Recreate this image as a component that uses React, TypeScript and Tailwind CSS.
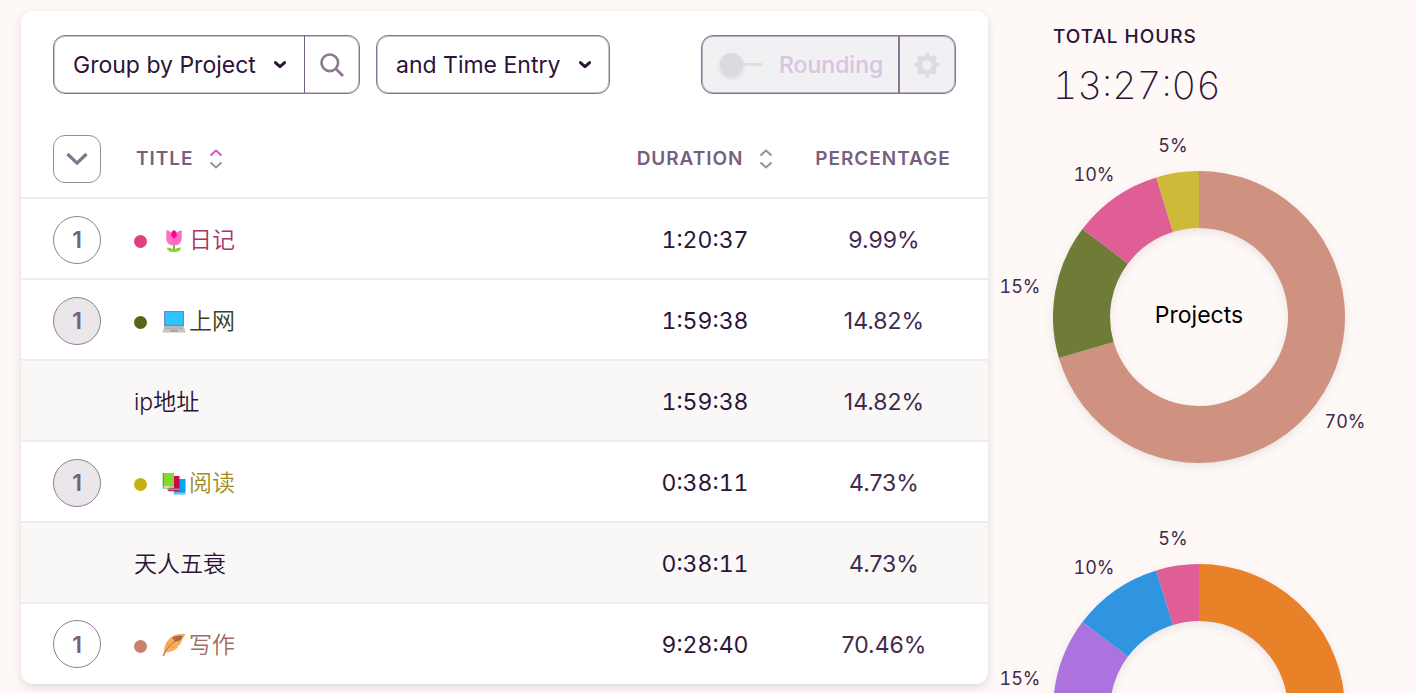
import type { ReactNode } from 'react'

type Slice = { share: number; color: string; label: string; x: number; y: number }

const PROJECTS: Slice[] = [
  { share: 70.46, color: '#cf9280', label: '70%', x: 345, y: 301 },
  { share: 14.82, color: '#6f7c38', label: '15%', x: 20, y: 166 },
  { share: 9.99, color: '#df5e96', label: '10%', x: 94, y: 54 },
  { share: 4.73, color: '#cdba38', label: '5%', x: 173, y: 25 },
]

const ENTRIES: Slice[] = [
  { share: 70.46, color: '#e88127', label: '70%', x: 345, y: 301 },
  { share: 14.82, color: '#ac73de', label: '15%', x: 20, y: 165 },
  { share: 9.99, color: '#2f95e0', label: '10%', x: 94, y: 54 },
  { share: 4.73, color: '#df5e96', label: '5%', x: 173, y: 25 },
]

const CX = 199
const CY = 197
const OUTER = 146
const INNER = 89

function point(radius: number, share: number) {
  const a = (share / 100) * Math.PI * 2
  return `${(CX + radius * Math.sin(a)).toFixed(2)} ${(CY - radius * Math.cos(a)).toFixed(2)}`
}

function slicePath(from: number, to: number) {
  const large = to - from > 50 ? 1 : 0
  return `M${point(OUTER, from)}A${OUTER} ${OUTER} 0 ${large} 1 ${point(OUTER, to)}L${point(INNER, to)}A${INNER} ${INNER} 0 ${large} 0 ${point(INNER, from)}Z`
}

function Donut({ slices, title }: { slices: Slice[]; title: string }) {
  let sum = 0
  const parts = slices.map((s) => {
    const from = sum
    sum += s.share
    return { ...s, d: slicePath(from, sum) }
  })
  return (
    <svg viewBox="0 0 400 393" className="block w-[400px] overflow-visible" role="img" aria-label={title}>
      <g className="drop-shadow-[0_3px_5px_rgba(44,19,56,0.1)]">
        {parts.map((p) => (
          <path key={p.label} d={p.d} fill={p.color} />
        ))}
      </g>
      {parts.map((p) => (
        <text key={p.label} x={p.x} y={p.y + 7} textAnchor="middle" fill="#412a4c" className="text-[18px] tabular-nums">
          {p.label}
        </text>
      ))}
      <text x={CX} y={CY + 6} textAnchor="middle" fill="#000" className="text-[23px]">
        {title}
      </text>
    </svg>
  )
}

function Caret() {
  return (
    <svg viewBox="0 0 14 10" className="h-[10px] w-[14px]" aria-hidden="true">
      <path d="M2.4 2.6 L7 6.7 L11.6 2.6" fill="none" stroke="#2c1338" strokeWidth="3" strokeLinecap="round" strokeLinejoin="round" />
    </svg>
  )
}

function Picker({ label, value, className }: { label: string; value: string; className: string }) {
  return (
    <div className={`grid items-center ${className}`}>
      <select
        aria-label={label}
        className="col-start-1 row-start-1 h-full w-full appearance-none bg-transparent pt-0.5 pr-9 pl-[19px] text-[23px] text-[#2c1338] outline-none"
      >
        <option>{value}</option>
      </select>
      <span className="pointer-events-none col-start-1 row-start-1 justify-self-end pr-[17px]">
        <Caret />
      </span>
    </div>
  )
}

function SortIcon({ active }: { active?: boolean }) {
  return (
    <svg viewBox="0 0 14 20" className="h-5 w-[14px]" fill="none" strokeWidth="2" aria-hidden="true">
      <path d="M1.5 6.5 L7 1.6 L12.5 6.5" stroke={active ? '#cb5bc0' : '#9b8aa2'} />
      <path d="M1.5 13.5 L7 18.4 L12.5 13.5" stroke="#9b8aa2" />
    </svg>
  )
}

function Gear() {
  const teeth = [0, 45, 90, 135, 180, 225, 270, 315]
  return (
    <svg viewBox="0 0 26 26" className="h-[26px] w-[26px]" aria-hidden="true">
      <circle cx="13" cy="13" r="7.2" fill="none" stroke="#dedbe1" strokeWidth="4.8" />
      {teeth.map((t) => (
        <path key={t} d="M10 5 L11 1.6 Q13 -0.8 15 1.6 L16 5 Z" fill="#dedbe1" transform={`rotate(${t} 13 13)`} />
      ))}
    </svg>
  )
}

function Tulip() {
  return (
    <svg viewBox="0 0 24 24" className="h-6 w-6" aria-hidden="true">
      <path d="M11 15h2v7h-2z" fill="#6cc02a" />
      <path d="M5 18.4c3.4 0 6 1 7 3.2 1-2.200 3.600-3.200 7-3.200 0 3-2.800 4.600-7 4.600s-7-1.600-7-4.600z" fill="#86d82f" />
      <path d="M4.300 1.200c2 .3 3.400 1 4.500 2L12 1l3.200 2.200c1.100-1 2.500-1.700 4.500-2v8.300c0 4.200-2.900 7-7.700 7s-7.700-2.800-7.700-7z" fill="#ff6dc6" />
      <path d="M12 1c1.800 1.500 2.900 3.500 2.900 5.400L12 9.800 9.100 6.400C9.100 4.500 10.200 2.500 12 1z" fill="#f4058c" />
    </svg>
  )
}

function Laptop() {
  return (
    <svg viewBox="0 0 24 24" className="h-6 w-6" aria-hidden="true">
      <path d="M2 1h20v15H2z" fill="#7a7ecb" />
      <path d="M3.200 2.200h17.600v12.600H3.200z" fill="#2bc6ff" />
      <path d="M2.200 16h19.600L23.500 22H.5z" fill="#c6c6c6" />
      <path d="M3.400 17h17.200M3 18.700h18" stroke="#a2a2a2" strokeWidth="1" strokeDasharray="1.500 .6" />
      <path d="M8.400 20.200h7.200v1.200H8.400z" fill="#8d8d8d" />
      <path d="M.5 22h23v1H.5z" fill="#dfdfdf" />
    </svg>
  )
}

function Books() {
  return (
    <svg viewBox="0 0 24 24" className="h-6 w-6" aria-hidden="true">
      <path d="M12 7h11.500v14H12z" fill="#00a4ef" />
      <path d="M11 20.600h12.500v2.200H12z" fill="#7fc4ea" />
      <path d="M7 4h10.500v13.500H7z" fill="#c60b48" />
      <path d="M5 16.600h12.500v2H6z" fill="#a88a95" />
      <path d="M5.500 18h12v1.200h-11z" fill="#bd2059" />
      <path d="M.8 1H12v13.500H.8z" fill="#86d82f" />
      <path d="M.8 1v15.600H12v-1H1.800V1z" fill="#4f9a48" />
      <path d="M1.800 14.300H12v1.400H1.800z" fill="#d8e4ce" />
    </svg>
  )
}

function Feather() {
  return (
    <svg viewBox="0 0 24 24" className="h-6 w-6" aria-hidden="true">
      <path d="M23.500.800C18.500.900 12.500 1.300 8.800 4.200 4 8 2.200 13.500 2 18.500L.7 22.800l1.200.5 1.900-3.700c5.600-.4 10.400-2.600 12.700-6l-1.600-.2c3.300-1.200 5.300-4.200 5.300-7.400 1.500-1.500 2.500-3.200 3.300-5.200z" fill="#f9ae5b" />
      <path d="M20.500 2.900C17 2.600 13.500 3 10.900 4l-.4 2.400 2.400.1-1 2.500 5-1.100 2.600-1.600z" fill="#a9694f" />
      <path d="M1.400 23C4 15.500 9.500 9.500 20.500 3" stroke="#9d6148" strokeWidth=".8" fill="none" />
      <path d="M6 14.500V9.500M9.500 11V7M7.500 13.500l5.500 1" stroke="#e79a4c" strokeWidth=".8" fill="none" />
    </svg>
  )
}

type Row = { kind: 'project' | 'entry'; open?: boolean; dot?: string; tint?: string; icon?: ReactNode; title: string; time: string; pct: string }

const ROWS: Row[] = [
  { kind: 'project', dot: 'bg-[#dc4180]', tint: 'text-[#a8346a]', icon: <Tulip />, title: '日记', time: '1:20:37', pct: '9.99%' },
  { kind: 'project', open: true, dot: 'bg-[#566614]', tint: 'text-[#3a3f1d]', icon: <Laptop />, title: '上网', time: '1:59:38', pct: '14.82%' },
  { kind: 'entry', title: 'ip地址', time: '1:59:38', pct: '14.82%' },
  { kind: 'project', open: true, dot: 'bg-[#c7af14]', tint: 'text-[#a08a20]', icon: <Books />, title: '阅读', time: '0:38:11', pct: '4.73%' },
  { kind: 'entry', title: '天人五衰', time: '0:38:11', pct: '4.73%' },
  { kind: 'project', dot: 'bg-[#c9806b]', tint: 'text-[#a66b5f]', icon: <Feather />, title: '写作', time: '9:28:40', pct: '70.46%' },
]

function TableRow({ row, last }: { row: Row; last: boolean }) {
  const line = last ? 'pb-0.5' : 'border-b-2 border-[#efecf0]'
  return (
    <tr className={`${last ? 'h-20' : 'h-[81px]'} ${row.kind === 'entry' ? 'bg-[#f9f8f7]' : ''}`}>
      <td className={`pt-0.5 pl-8 ${line}`}>
        {row.kind === 'project' && (
          <button
            type="button"
            aria-expanded={!!row.open}
            className={`flex size-12 items-center justify-center rounded-full border border-[#8f7e97] pt-0.5 text-[23px] font-semibold text-[#75607f] ${row.open ? 'bg-[#ebe6ea]' : 'bg-white'}`}
          >
            1
          </button>
        )}
      </td>
      <td className={`pt-1 ${line}`}>
        {row.kind === 'project' ? (
          <div className="flex items-center">
            <span className={`mt-0.5 mr-[15px] size-[13px] rounded-full ${row.dot}`} />
            {row.icon}
            <span className={`ml-[3px] font-[350] ${row.tint}`}>{row.title}</span>
          </div>
        ) : (
          <span className="font-[350]">{row.title}</span>
        )}
      </td>
      <td className={`pt-1 text-center tabular-nums ${line}`}>{row.time}</td>
      <td className={`pt-1 pr-[14px] text-center text-[#412a4c] ${line}`}>{row.pct}</td>
    </tr>
  )
}

export default function App() {
  return (
    <div className="flex h-screen items-start gap-3 overflow-hidden bg-[#fef9f6] pl-[21px] font-['Inter','Noto_Sans_CJK_SC',sans-serif] text-[#2c1338]">
      <main className="mt-[11px] min-w-0 flex-1 rounded-xl bg-white pt-6 shadow-[0_3px_8px_rgba(44,19,56,0.14)]">
        <div className="flex items-stretch gap-4 px-8">
          <div className="flex h-[59px] rounded-xl border border-[#887690] shadow-[inset_0_0_0_1px_#c9c0cd]">
            <Picker label="Group by" value="Group by Project" className="w-[250px]" />
            <button type="button" aria-label="Search" className="flex w-[55px] items-center justify-center border-l border-[#75607f]">
              <svg viewBox="0 0 24 24" className="size-6" fill="none" stroke="#8a7792" strokeWidth="2.600" aria-hidden="true">
                <circle cx="9.800" cy="9.800" r="8.300" />
                <path d="M15.800 15.800 L23 23" strokeWidth="2.800" />
              </svg>
            </button>
          </div>
          <div className="flex rounded-xl border border-[#887690] shadow-[inset_0_0_0_1px_#c9c0cd]">
            <Picker label="Then group by" value="and Time Entry" className="w-[232px]" />
          </div>
          <div className="ml-auto flex rounded-xl border border-[#887690] bg-[#f1f0f3] shadow-[inset_0_0_0_1px_#b9adbf]">
            <label className="flex w-[196px] items-center pl-[18px] text-[23px] font-medium text-[#d8c4e0]">
              <input type="checkbox" disabled className="sr-only" />
              <span className="flex items-center">
                <span className="size-[23px] rounded-full bg-[#dcd9df] shadow-[0_2px_4px_rgba(44,19,56,0.12)]" />
                <span className="h-[3px] w-5 rounded-r-full bg-[#e0dee3]" />
              </span>
              <span className="ml-4 pt-0.5">Rounding</span>
            </label>
            <button type="button" disabled aria-label="Rounding settings" className="flex w-[57px] items-center justify-center border-l-2 border-[#887690] pr-0.5">
              <Gear />
            </button>
          </div>
        </div>

        <table className="mt-[25px] w-full table-fixed border-separate border-spacing-0 text-[23px]">
          <colgroup>
            <col className="w-[113px]" />
            <col />
            <col className="w-[178px]" />
            <col className="w-[194px]" />
          </colgroup>
          <thead>
            <tr className="h-20 text-[19px] text-[#75607f]">
              <th className="border-b-2 border-[#efecf0] pt-0.5 pl-8">
                <button type="button" aria-label="Expand all" className="flex size-12 items-center justify-center rounded-xl border border-[#9b8aa2]">
                  <svg viewBox="0 0 22 14" className="h-[14px] w-[22px]" fill="none" stroke="#85728d" strokeWidth="3.200" strokeLinejoin="round" aria-hidden="true">
                    <path d="M1.500 2 L11 11.200 L20.500 2" />
                  </svg>
                </button>
              </th>
              <th className="border-b-2 border-[#efecf0] pt-0.5 pl-0.5">
                <button type="button" className="flex items-center gap-4 font-semibold tracking-wider">
                  TITLE <SortIcon active />
                </button>
              </th>
              <th className="border-b-2 border-[#efecf0] pt-0.5">
                <button type="button" className="mx-auto flex items-center gap-4 font-semibold tracking-wider">
                  DURATION <SortIcon />
                </button>
              </th>
              <th className="border-b-2 border-[#efecf0] pt-0.5 pr-4 text-center font-semibold tracking-wider">PERCENTAGE</th>
            </tr>
          </thead>
          <tbody>
            {ROWS.map((row, i) => (
              <TableRow key={i} row={row} last={i === ROWS.length - 1} />
            ))}
          </tbody>
        </table>
      </main>

      <aside className="w-[416px] shrink-0 pt-[25px]">
        <h2 className="pl-[53px] text-[19px] leading-6 font-medium tracking-wider">TOTAL HOURS</h2>
        <p className="mt-3 mb-[11px] pl-[53px] text-[38px] leading-[48px] font-extralight tabular-nums">13:27:06</p>
        <Donut slices={PROJECTS} title="Projects" />
        <Donut slices={ENTRIES} title="Time entries" />
      </aside>
    </div>
  )
}
